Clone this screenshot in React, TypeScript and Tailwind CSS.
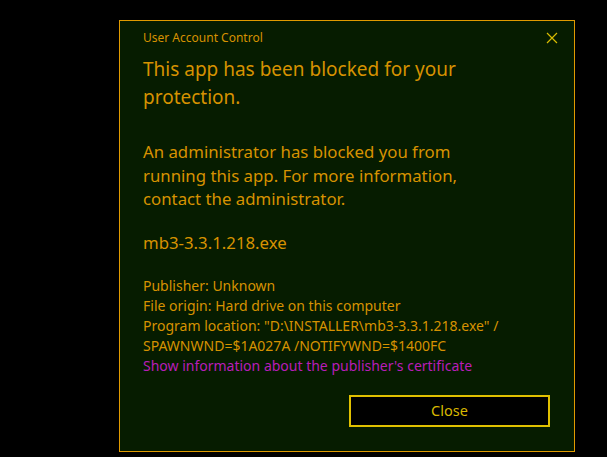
export default function App() {
  return (
    <div
      className="w-[607px] h-[457px] bg-black pl-[119px] pt-[20px]"
      style={{ fontFamily: '"Noto Sans", "Open Sans", sans-serif' }}
    >
      <div className="w-[456px] h-[432px] border border-[#e09a00] bg-[#061c00] flex flex-col text-[#d69200]">
        {/* Caption bar */}
        <div className="flex items-start justify-between pl-[23px] pr-[16px] pt-[8px]">
          <span className="text-[12px] leading-[18px]">User Account Control</span>
          <button className="w-[12px] h-[12px] mt-[3px] text-[#d8bc00]">
            <svg width="12" height="12" viewBox="0 0 12 12" fill="none">
              <path d="M1 1L11 11M11 1L1 11" stroke="currentColor" strokeWidth="1.2" />
            </svg>
          </button>
        </div>

        <div className="pl-[23px] pr-[24px]">
          <h1 className="mt-[8px] text-[19px] leading-[28px] font-normal">
            This app has been blocked for your protection.
          </h1>

          <p className="mt-[29px] text-[16.8px] leading-[23.5px] w-[330px]">
            An administrator has blocked you from running this app. For more information, contact the administrator.
          </p>

          <p className="mt-[20px] text-[16.8px] leading-[23.5px]">mb3-3.3.1.218.exe</p>

          <div className="mt-[22px] text-[14px] leading-[20px] w-[360px]">
            <p>Publisher: Unknown</p>
            <p>File origin: Hard drive on this computer</p>
            <p>
              Program location: "D:\INSTALLER\mb3-3.3.1.218.exe" / SPAWNWND=$1A027A /NOTIFYWND=$1400FC
            </p>
            <a className="text-[#b81cb8] cursor-pointer">Show information about the publisher's certificate</a>
          </div>
        </div>

        <div className="mt-auto flex justify-end pr-[24px] pb-[24px]">
          <button className="w-[201px] h-[32px] border-2 border-[#e0c000] bg-black text-[#d8b800] text-[14.5px]">
            Close
          </button>
        </div>
      </div>
    </div>
  );
}
